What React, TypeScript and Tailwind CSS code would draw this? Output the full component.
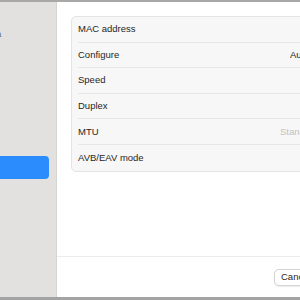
import React from 'react';

const rows: { label: string; value?: string; placeholder?: boolean; offset?: string }[] = [
  { label: 'MAC address' },
  { label: 'Configure', value: 'Automatic', offset: 'ml-[212px]' },
  { label: 'Speed' },
  { label: 'Duplex' },
  { label: 'MTU', value: 'Standard (1500)', placeholder: true, offset: 'ml-[202px]' },
  { label: 'AVB/EAV mode' },
];

export default function App() {
  return (
    <div className="flex h-[300px] w-[300px] flex-col overflow-hidden bg-white font-['Liberation_Sans',Arial,sans-serif] text-[9.5px] text-[#262626]">
      <div className="h-[2px] shrink-0 bg-[#a8a8a8]" />
      <div className="flex min-h-0 flex-1">
        <aside className="flex w-[57px] shrink-0 flex-col border-r border-[#d6d4d2] bg-[#e3e1df]">
          <div className="mt-[25px] h-[12px] overflow-hidden">
            <span className="-ml-[4px] text-[#666]">a</span>
          </div>
          <div className="mt-[117px] h-[23px] w-[49px] rounded-r-[4px] bg-[#2b8cfd]" />
        </aside>
        <main className="flex min-w-0 flex-1 flex-col">
          <div className="pl-[14px] pt-[14px]">
            <div className="w-[290px] overflow-hidden rounded-[5px] border border-[#e4e4e4] bg-[#f7f7f7]">
              {rows.map((r, i) => (
                <div key={r.label} className="px-[6px]">
                  <div
                    className={`flex h-[25.6px] items-center ${i < rows.length - 1 ? 'border-b border-[#e6e6e6]' : ''}`}
                  >
                    <span className="w-[60px] shrink-0 whitespace-nowrap">{r.label}</span>
                    {r.value && (
                      <span
                        className={`${r.offset} -translate-x-[60px] whitespace-nowrap ${r.placeholder ? 'text-[#c2c2c2]' : 'text-[#262626]'}`}
                      >
                        {r.value}
                      </span>
                    )}
                  </div>
                </div>
              ))}
            </div>
          </div>
          <div className="flex-1" />
          <div className="flex h-[41px] shrink-0 items-center border-t border-[#ececec] pl-[217px]">
            <button className="h-[17px] shrink-0 whitespace-nowrap rounded-[5px] border border-[#d4d4d4] bg-white px-[6px] text-[9.5px] leading-none text-[#262626] shadow-[0_0.5px_1px_rgba(0,0,0,0.08)]">
              Cancel
            </button>
          </div>
        </main>
      </div>
      <div className="h-[3px] shrink-0 bg-[#a3a3a3]" />
    </div>
  );
}
